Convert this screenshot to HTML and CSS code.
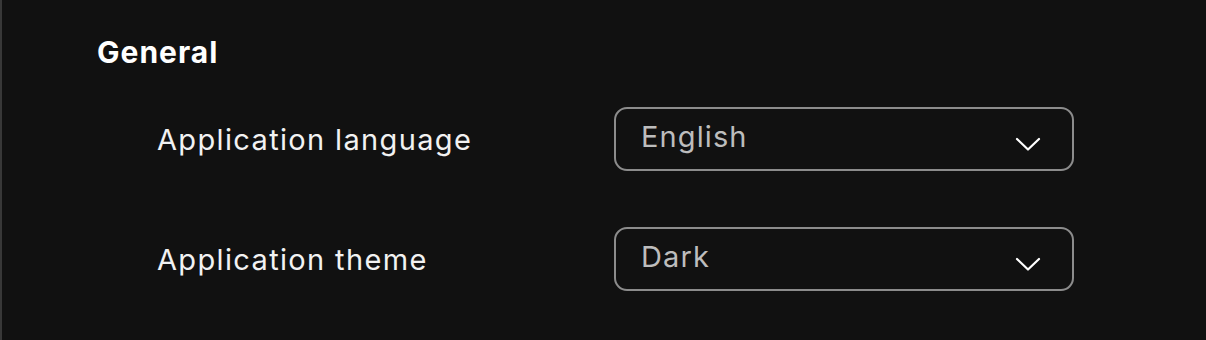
FILE: index.html
```html
<!DOCTYPE html>
<html>
<head>
<meta charset="utf-8">
<link rel="stylesheet" href="styles.css">
</head>
<body>
<div class="panel">
  <h2 class="section-title">General</h2>
  <div class="rows">
    <div class="row">
      <div class="label">Application language</div>
      <div class="select">
        <span class="value">English</span>
        <svg class="chevron" width="26" height="14" viewBox="0 0 26 14"><path d="M2 2 L13 12.5 L24 2" fill="none" stroke="#fff" stroke-width="2.2" stroke-linecap="round" stroke-linejoin="round"/></svg>
      </div>
    </div>
    <div class="row">
      <div class="label">Application theme</div>
      <div class="select">
        <span class="value">Dark</span>
        <svg class="chevron" width="26" height="14" viewBox="0 0 26 14"><path d="M2 2 L13 12.5 L24 2" fill="none" stroke="#fff" stroke-width="2.2" stroke-linecap="round" stroke-linejoin="round"/></svg>
      </div>
    </div>
  </div>
</div>
</body>
</html>
```
FILE: styles.css
```css
html, body {
  margin: 0;
  padding: 0;
  background: #111111;
  height: 100%;
}
body {
  font-family: Inter, "Noto Sans", sans-serif;
}
.panel {
  box-sizing: border-box;
  height: 340px;
  border-left: 2px solid #383838;
  padding: 34px 0 0 95px;
}
.section-title {
  margin: 0;
  font-size: 30px;
  font-weight: 700;
  line-height: 36px;
  letter-spacing: 1px;
  color: #ffffff;
}
.rows {
  margin-top: 37px;
  margin-left: 60px;
  display: flex;
  flex-direction: column;
  gap: 56px;
}
.row {
  display: flex;
  align-items: center;
  height: 64px;
}
.label {
  width: 457px;
  font-size: 29px;
  letter-spacing: 1.35px;
  color: #f2f2f2;
}
.select {
  box-sizing: border-box;
  width: 460px;
  height: 64px;
  border: 2px solid #8c8c8c;
  border-radius: 13px;
  display: flex;
  align-items: center;
  justify-content: space-between;
  padding: 0 31px 0 25px;
}
.value {
  font-size: 29px;
  letter-spacing: 1.1px;
  color: #bdbdbd;
  margin-top: -6px;
}
.chevron {
  display: block;
  margin-top: 10px;
}
```
